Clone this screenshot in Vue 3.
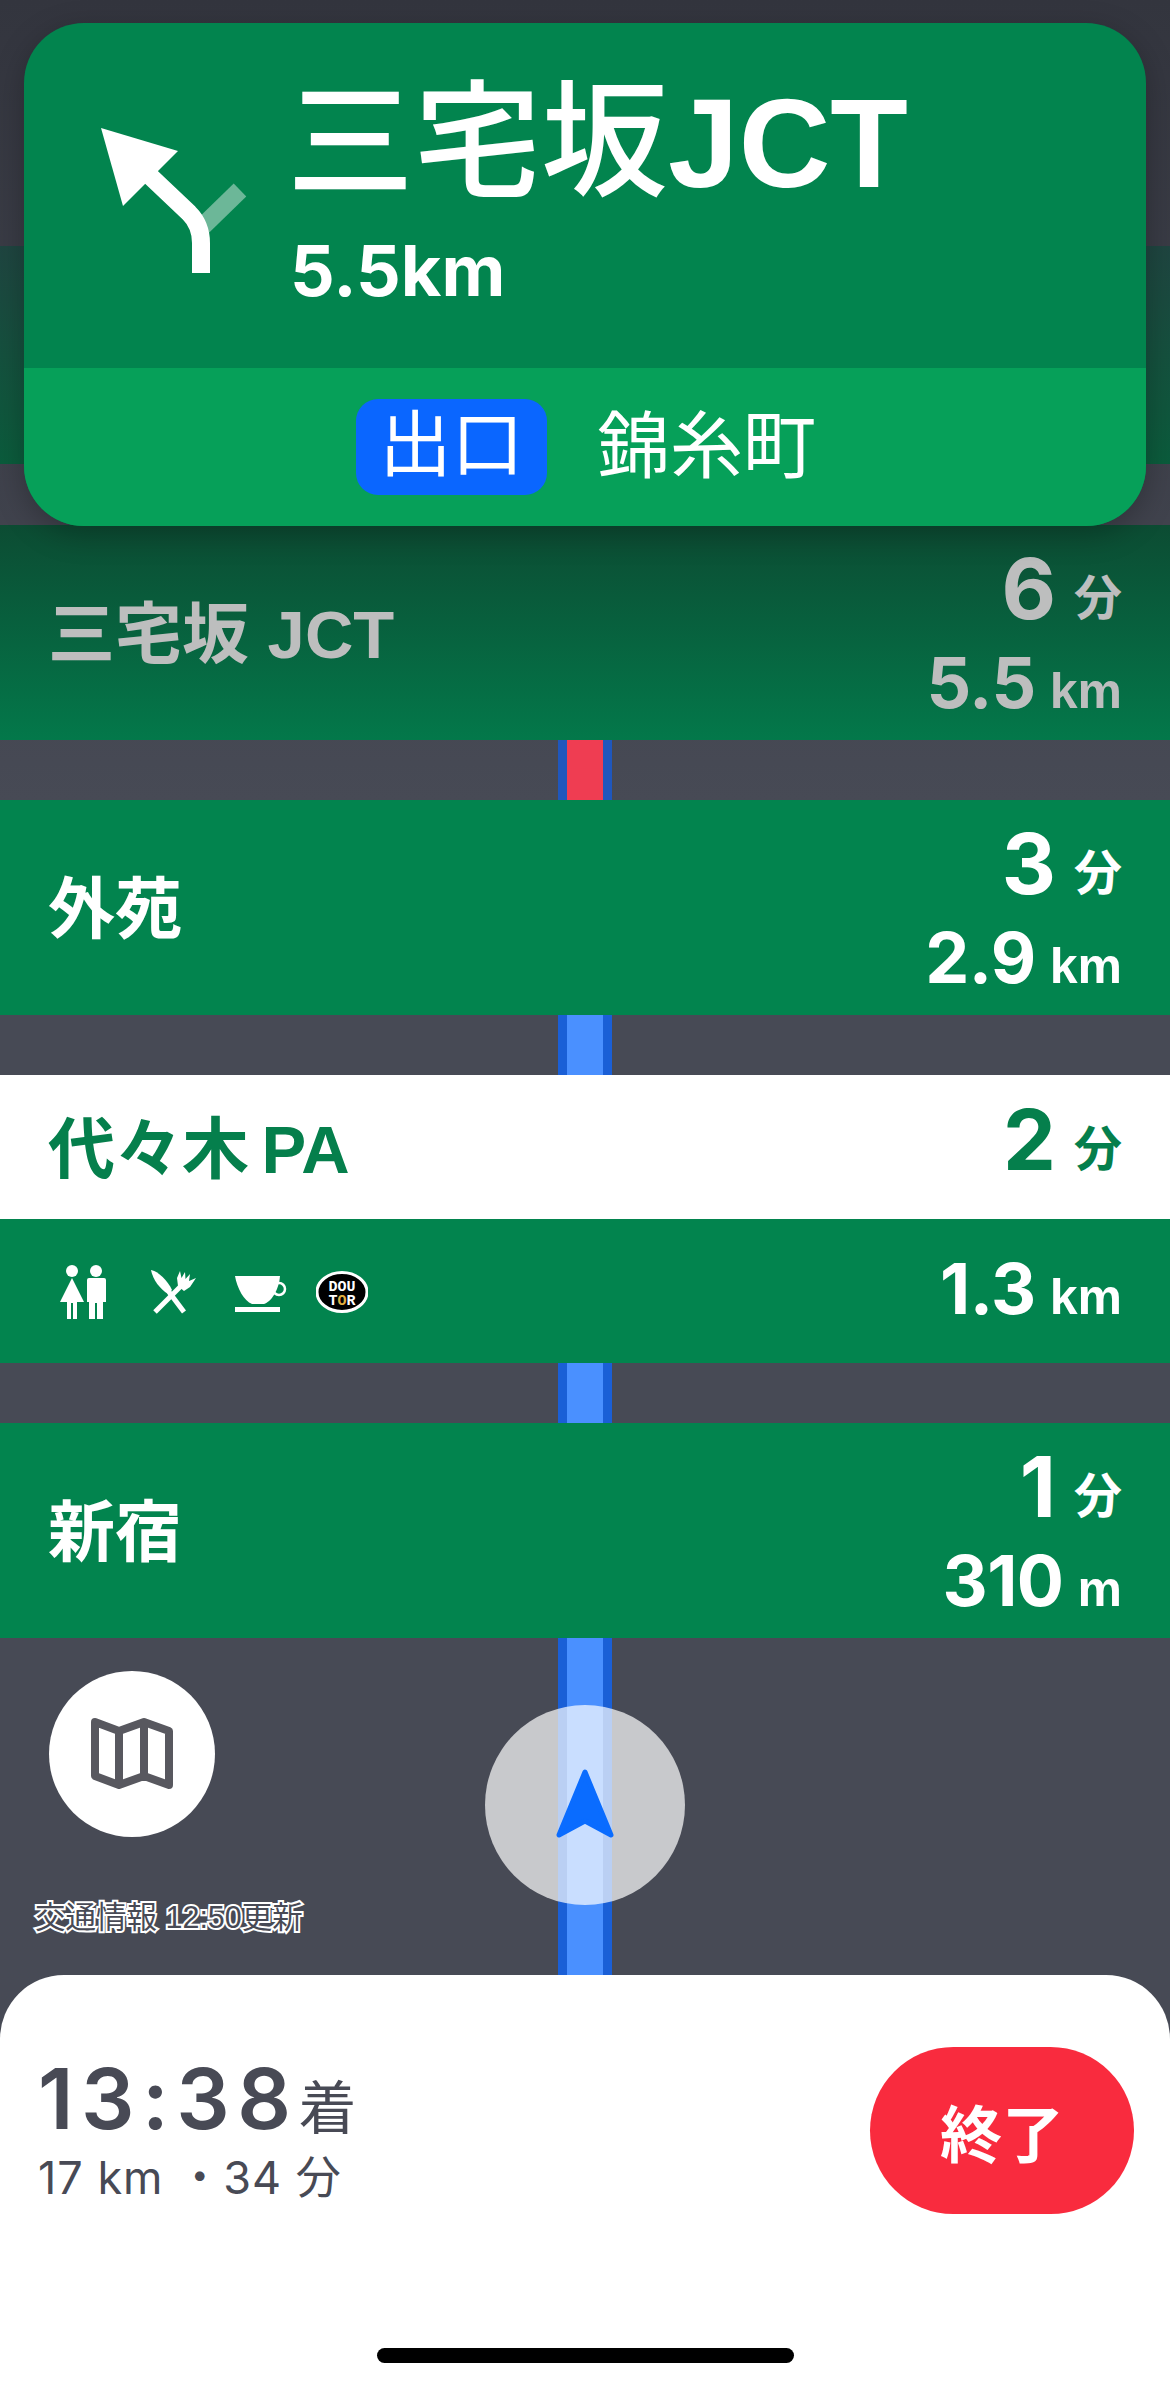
<script setup>
const stops = [
  { name: '外苑', min: 3, dist: '2.9', unit: 'km', road: 'blue' },
]
const services = [
  { id: 'toilet', box: '0 0 46 54' },
  { id: 'food', box: '0 0 48 46' },
  { id: 'cafe', box: '0 0 52 36' },
  { id: 'doutor', box: '0 0 52 42' },
]
</script>

<template>
  <main class="screen">
    <header class="head">
      <div class="band"></div>
      <section class="card">
        <div class="card-top">
          <svg class="turn" viewBox="60 100 200 200">
            <path d="M203 226 L240 190" class="turn-ghost" />
            <path d="M150 176 L189 213 Q201 225 201 243 L201 273" class="turn-shaft" />
            <path d="M101 128 L178 151 L123 206 Z" fill="#fff" />
          </svg>
          <div class="card-text">
            <div class="card-title">三宅坂<span class="jct">JCT</span></div>
            <div class="card-dist">5.5km</div>
          </div>
        </div>
        <div class="card-exit">
          <span class="exit-badge">出口</span>
          <span class="exit-name">錦糸町</span>
        </div>
      </section>
    </header>

    <div class="row passed">
      <div class="name">三宅坂 JCT</div>
      <div class="vals">
        <div class="val"><b>6</b><span>分</span></div>
        <div class="val"><b class="small">5.5</b><span class="unit">km</span></div>
      </div>
    </div>
    <div class="gap"><i class="road red"></i></div>

    <template v-for="s in stops" :key="s.name">
      <div class="row">
        <div class="name">{{ s.name }}</div>
        <div class="vals">
          <div class="val"><b>{{ s.min }}</b><span>分</span></div>
          <div class="val"><b class="small">{{ s.dist }}</b><span class="unit">{{ s.unit }}</span></div>
        </div>
      </div>
      <div class="gap"><i class="road"></i></div>
    </template>

    <div class="pa-top">
      <div class="name">代々木 PA</div>
      <div class="val"><b>2</b><span>分</span></div>
    </div>
    <div class="pa-bottom">
      <div class="icons">
        <svg v-for="icon in services" :key="icon.id" :class="['ico', icon.id]" :viewBox="icon.box">
          <g v-if="icon.id === 'toilet'" fill="#fff">
            <circle cx="12" cy="6" r="6" />
            <circle cx="36" cy="6" r="6" />
            <path d="M12 13 L24 37 L17 37 V54 H13 V38 H11 V54 H7 V37 L0 37 Z" />
            <path d="M27 15 Q27 13 29 13 H44 Q46 13 46 15 V37 H43 V54 H37 V38 H35 V54 H29 V37 H27 Z" />
          </g>
          <g v-else-if="icon.id === 'food'">
            <path d="M1 1 C8 2 18 12 22 21 L18 25 C10 20 3 11 1 1 Z" fill="#fff" />
            <path d="M19 23 L34 43" stroke="#fff" stroke-width="5" />
            <path d="M5 43 L32 16" stroke="#fff" stroke-width="5" />
            <path d="M28 17 L27 9 L30 2 L31.5 9 L35 3 L35.5 10 L40 5 L39 12 L46 9 L40 18 L34 22 Z" fill="#fff" />
          </g>
          <g v-else-if="icon.id === 'cafe'">
            <path d="M0 0 H45 C44 14 36 26 29 28 H17 C9 25 2 12 0 0 Z" fill="#fff" />
            <circle cx="44" cy="13" r="6" fill="none" stroke="#fff" stroke-width="2.5" />
            <rect x="0" y="31" width="45" height="5" fill="#fff" />
          </g>
          <g v-else>
            <ellipse cx="26" cy="21" rx="25" ry="19.5" fill="#000" stroke="#fff" stroke-width="3" />
            <text x="26" y="20" class="logo-text" fill="#fff">DOU</text>
            <text x="26" y="34" class="logo-text" fill="#fff">T<tspan fill="#e0b040">O</tspan>R</text>
          </g>
        </svg>
      </div>
      <div class="val low"><b class="small">1.3</b><span class="unit">km</span></div>
    </div>
    <div class="gap"><i class="road"></i></div>

    <div class="row">
      <div class="name">新宿</div>
      <div class="vals">
        <div class="val"><b>1</b><span>分</span></div>
        <div class="val"><b class="small">310</b><span class="unit">m</span></div>
      </div>
    </div>

    <div class="map-area">
      <i class="road tall"></i>
      <button class="map-btn">
        <svg viewBox="92 1716 82 76" class="map-ico">
          <path d="M96 1722 L120 1731 L145 1722 L170 1731 L170 1785 L145 1776 L120 1785 L96 1776 Z" />
          <path d="M120 1731 V1785 M145 1722 V1776" />
        </svg>
      </button>
      <button class="locate">
        <svg viewBox="0 0 60 72" class="locate-ico">
          <path d="M30 3 L56 66 L30 52 L4 66 Z" />
        </svg>
      </button>
      <div class="traffic">交通情報 12:50更新</div>
    </div>

    <footer class="sheet">
      <div class="eta">
        <div class="eta-main"><span class="eta-time">13:38</span><span class="eta-suffix">着</span></div>
        <div class="eta-sub">17 km ・34 分</div>
      </div>
      <button class="end">終了</button>
      <div class="home"></div>
    </footer>
  </main>
</template>

<style>
html, body {
  margin: 0;
  background: #474a55;
}
</style>

<style scoped>
.screen {
  position: relative;
  width: 1170px;
  height: 2390px;
  overflow: hidden;
  display: flex;
  flex-direction: column;
  color: #fff;
  background: linear-gradient(#33353e, #474a55 800px);
  font-family: "Liberation Sans", "Noto Sans CJK JP", sans-serif;
}

.head {
  position: relative;
  height: 525px;
  flex: none;
  padding: 23px 24px 0;
  box-sizing: border-box;
}

.band {
  position: absolute;
  left: 0;
  right: 0;
  top: 246px;
  height: 218px;
  background: linear-gradient(#1f4540, #0b5c3c);
}

.card {
  position: relative;
  height: 503px;
  border-radius: 60px;
  overflow: hidden;
  display: flex;
  flex-direction: column;
  background: #02844e;
  box-shadow: 0 8px 30px rgba(0, 0, 0, 0.25);
}

.card-top {
  height: 345px;
  flex: none;
  display: flex;
  position: relative;
}

.turn {
  position: absolute;
  left: 36px;
  top: 77px;
  width: 200px;
  height: 200px;
}

.turn-ghost {
  fill: none;
  stroke: #fff;
  stroke-opacity: 0.42;
  stroke-width: 18;
}

.turn-shaft {
  fill: none;
  stroke: #fff;
  stroke-width: 18;
}

.card-text {
  margin-left: 263px;
  padding-top: 50px;
}

.card-title {
  font-size: 127px;
  line-height: 140px;
  font-weight: 500;
  white-space: nowrap;
}

.jct {
  font-weight: 700;
}

.card-dist {
  font-size: 70px;
  line-height: 80px;
  font-weight: 700;
  margin-top: 18px;
  margin-left: 3px;
  font-family: Inter, "Liberation Sans", sans-serif;
}

.card-exit {
  flex: 1;
  background: #06a059;
  display: flex;
  align-items: center;
  justify-content: center;
  gap: 50px;
  padding-left: 2px;
}

.exit-badge {
  width: 191px;
  height: 96px;
  border-radius: 22px;
  background: #0a66ff;
  font-size: 72px;
  line-height: 92px;
  text-align: center;
}

.exit-name {
  font-size: 73px;
  line-height: 96px;
}

.row {
  height: 215px;
  flex: none;
  box-sizing: border-box;
  padding: 0 48px 0 48px;
  display: flex;
  align-items: center;
  justify-content: space-between;
  background: #02844e;
}

.row.passed {
  color: #bdbebe;
  background: linear-gradient(#0c4c33, #03784a);
}

.name {
  font-size: 67px;
  font-weight: 700;
  margin-top: -8px;
}

.vals {
  display: flex;
  flex-direction: column;
  align-items: flex-end;
  margin-top: 14px;
}

.vals .val + .val {
  margin-top: -4px;
}

.val {
  display: flex;
  align-items: baseline;
  justify-content: flex-end;
  font-family: Inter, "Liberation Sans", "Noto Sans CJK JP", sans-serif;
  line-height: 84px;
}

.val.low {
  margin-top: 4px;
}

.val b {
  font-size: 84px;
  font-weight: 700;
}

.val b.small {
  font-size: 70px;
  letter-spacing: -0.5px;
}

.val span {
  font-size: 48px;
  font-weight: 700;
  margin-left: 18px;
  transform: translateY(-4px);
  font-family: "Liberation Sans", "Noto Sans CJK JP", sans-serif;
}

.val span.unit {
  font-size: 50px;
  margin-left: 14px;
  transform: none;
}

.gap {
  height: 60px;
  flex: none;
  display: flex;
  justify-content: center;
}

.road {
  display: block;
  width: 36px;
  border: solid #1a5fd6;
  border-width: 0 9px;
  background: #4a90ff;
}

.road.red {
  background: #ef3d52;
  border-color: #1f57bd;
}

.road.tall {
  height: 100%;
}

.pa-top {
  height: 144px;
  flex: none;
  box-sizing: border-box;
  padding: 0 48px 0 48px;
  display: flex;
  align-items: center;
  justify-content: space-between;
  background: #fff;
  color: #057f4c;
}

.pa-top .name {
  word-spacing: -6px;
}

.pa-bottom {
  height: 144px;
  flex: none;
  box-sizing: border-box;
  padding: 0 48px 0 60px;
  display: flex;
  align-items: center;
  justify-content: space-between;
  background: #02844e;
}

.icons {
  display: flex;
  align-items: center;
  margin-top: 2px;
}

.ico {
  display: block;
  flex: none;
}

.toilet {
  width: 46px;
  height: 54px;
}

.food {
  width: 48px;
  height: 46px;
  margin-left: 44px;
}

.cafe {
  width: 52px;
  height: 36px;
  margin-left: 37px;
  margin-top: 4px;
}

.doutor {
  width: 52px;
  height: 42px;
  margin-left: 29px;
}

.logo-text {
  font-size: 15px;
  font-weight: 700;
  text-anchor: middle;
  font-family: "Liberation Mono", monospace;
}

.map-area {
  position: relative;
  flex: 1;
  display: flex;
  justify-content: center;
}

.map-btn {
  position: absolute;
  left: 49px;
  top: 33px;
  width: 166px;
  height: 166px;
  border: 0;
  padding: 0;
  border-radius: 50%;
  background: #fff;
  display: flex;
  align-items: center;
  justify-content: center;
}

.map-ico {
  width: 82px;
  height: 76px;
  fill: none;
  stroke: #58585f;
  stroke-width: 8;
  stroke-linejoin: round;
}

.locate {
  position: absolute;
  left: 485px;
  top: 67px;
  width: 200px;
  height: 200px;
  border: 0;
  padding: 0;
  border-radius: 50%;
  background: rgba(255, 255, 255, 0.7);
  display: flex;
  align-items: center;
  justify-content: center;
}

.locate-ico {
  width: 60px;
  height: 72px;
  fill: #0a6cff;
  stroke: #0a6cff;
  stroke-width: 5;
  stroke-linejoin: round;
}

.traffic {
  position: absolute;
  left: 35px;
  top: 261px;
  font-size: 30.5px;
  line-height: 36px;
  color: #484a55;
  -webkit-text-stroke: 4px #fff;
  paint-order: stroke fill;
  white-space: nowrap;
}

.sheet {
  position: relative;
  height: 415px;
  flex: none;
  box-sizing: border-box;
  padding: 72px 36px 0 38px;
  display: flex;
  align-items: flex-start;
  justify-content: space-between;
  background: #fff;
  border-radius: 64px 64px 0 0;
  color: #484a55;
}

.eta-main {
  display: flex;
  align-items: baseline;
  line-height: 96px;
  margin-top: 4px;
}

.eta-time {
  font-family: Inter, "Liberation Sans", sans-serif;
  font-size: 84px;
  font-weight: 600;
  letter-spacing: 7.5px;
}

.eta-suffix {
  font-size: 58px;
  margin-left: 0;
}

.eta-sub {
  font-family: Inter, "Liberation Sans", "Noto Sans CJK JP", sans-serif;
  font-size: 45px;
  line-height: 56px;
  margin-top: -7px;
  letter-spacing: 1px;
}

.end {
  width: 264px;
  height: 167px;
  border: 0;
  padding: 0;
  margin-top: 0;
  border-radius: 84px;
  background: #f92b3e;
  color: #fff;
  font-family: "Liberation Sans", "Noto Sans CJK JP", sans-serif;
  font-size: 62px;
  font-weight: 700;
}

.home {
  position: absolute;
  left: 377px;
  top: 373px;
  width: 417px;
  height: 15px;
  border-radius: 8px;
  background: #000;
}
</style>
